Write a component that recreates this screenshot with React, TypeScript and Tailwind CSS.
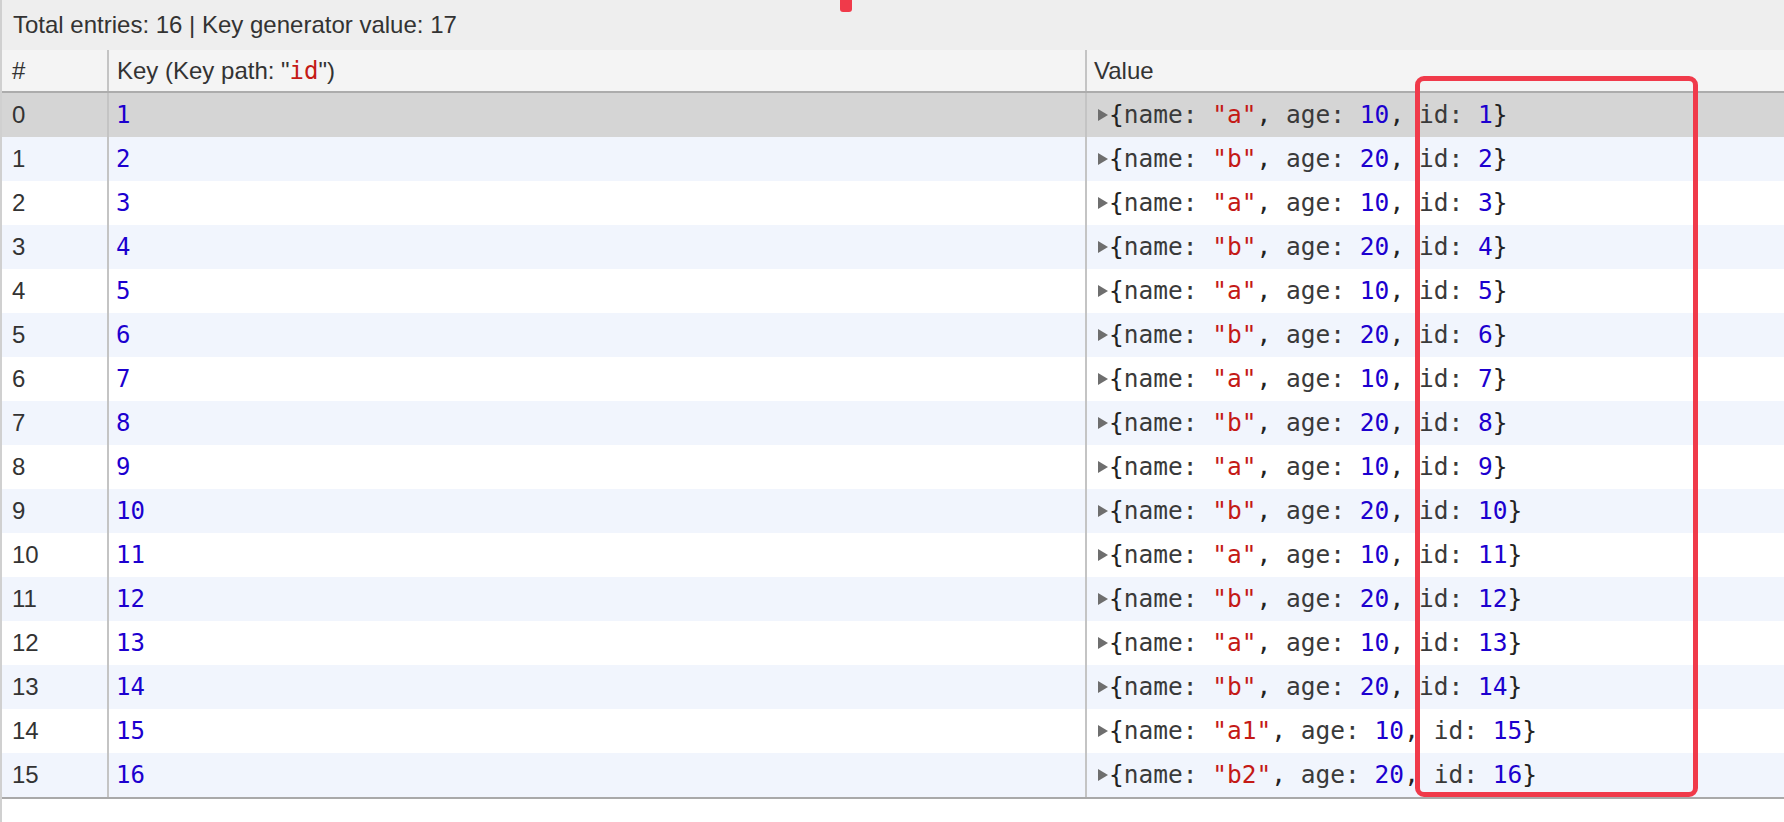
import React from "react";

interface Entry {
  name: string;
  age: number;
  id: number;
}

const entries: Entry[] = Array.from({ length: 16 }, (_, i) => {
  const id = i + 1;
  let name = i % 2 === 0 ? "a" : "b";
  if (id === 15) name = "a1";
  if (id === 16) name = "b2";
  return { name, age: i % 2 === 0 ? 10 : 20, id };
});

function Triangle() {
  return (
    <svg width="12" height="14" viewBox="0 0 12 14" className="shrink-0">
      <path d="M1 1 L11 7 L1 13 Z" fill="#6e6e6e" />
    </svg>
  );
}

function ValuePreview({ entry }: { entry: Entry }) {
  return (
    <span className="whitespace-pre text-[#222]">
      {"{"}
      <span className="text-[#3a3a3a]">name: </span>
      <span className="text-[#c41a16]">"{entry.name}"</span>
      {", "}
      <span className="text-[#3a3a3a]">age: </span>
      <span className="text-[#1c00cf]">{entry.age}</span>
      {", "}
      <span className="text-[#3a3a3a]">id: </span>
      <span className="text-[#1c00cf]">{entry.id}</span>
      {"}"}
    </span>
  );
}

export default function App() {
  return (
    <div className="relative w-[1784px] h-[822px] overflow-hidden bg-white border-l-2 border-[#d0d0d0] font-['Liberation_Sans',Arial,sans-serif] text-[24px] text-[#333]">
      {/* toolbar */}
      <div className="h-[50px] bg-[#eeeeee] flex items-center pl-[11px]">
        Total entries: 16 | Key generator value: 17
      </div>

      {/* grid */}
      <div className="border-b-2 border-[#a9a9a9]">
        <div className="grid grid-cols-[105px_978px_1fr] h-[43px] bg-[#f4f4f4] border-b-2 border-[#acacac]">
          <div className="flex items-center pl-[10px]">#</div>
          <div className="flex items-center pl-[8px] border-l-2 border-[#c4c4c4]">
            Key (Key path: "
            <span className="font-['DejaVu_Sans_Mono',monospace] text-[#c41a16]">id</span>
            ")
          </div>
          <div className="flex items-center pl-[7px] border-l-2 border-[#c4c4c4]">Value</div>
        </div>

        {entries.map((entry, i) => (
          <div
            key={entry.id}
            className={
              "grid grid-cols-[105px_978px_1fr] h-[44px] " +
              (i === 0 ? "bg-[#d5d5d5]" : i % 2 === 1 ? "bg-[#f1f5fd]" : "bg-white")
            }
          >
            <div className="flex items-center pl-[10px]">{i}</div>
            <div className="flex items-center pl-[7px] border-l-2 border-[#c4c4c4] font-['DejaVu_Sans_Mono',monospace] text-[#1c00cf]">
              {entry.id}
            </div>
            <div className="flex items-center pl-[10px] border-l-2 border-[#c4c4c4] font-['DejaVu_Sans_Mono',monospace] text-[24.5px]">
              <Triangle />
              <ValuePreview entry={entry} />
            </div>
          </div>
        ))}
      </div>

      {/* annotation marks */}
      <div className="absolute left-[838px] top-0 w-[12px] h-[12px] rounded-b-[3px] bg-[#f03a4a]" />
      <div className="absolute left-[1413px] top-[76px] w-[283px] h-[721px] rounded-[9px] border-[5px] border-[#f03a4a]" />
    </div>
  );
}
